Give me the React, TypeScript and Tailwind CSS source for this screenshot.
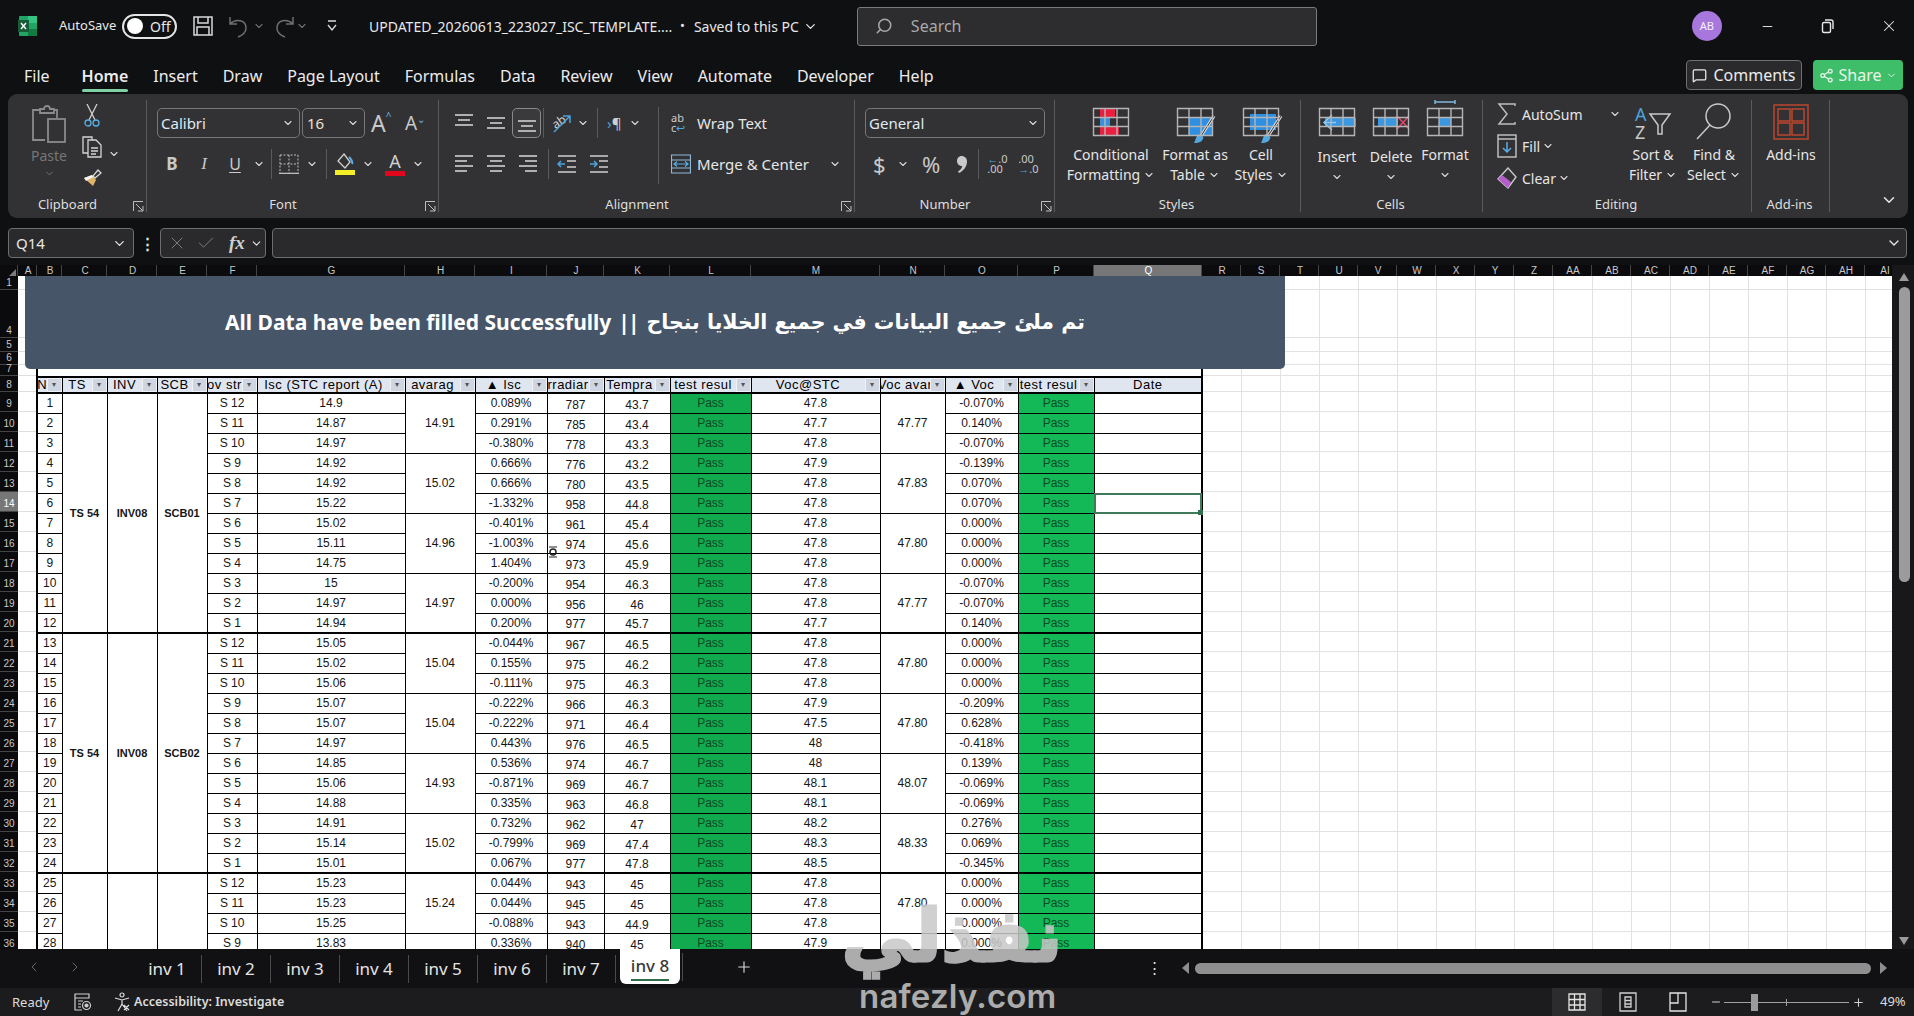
import type { ReactNode } from "react";
import { ChevronDown, Search, X, Minus, ChevronLeft, ChevronRight, Plus, Check, MessageSquare, Share2 } from "lucide-react";

const COLS = ["A","B","C","D","E","F","G","H","I","J","K","L","M","N","O","P","Q","R","S","T","U","V","W","X","Y","Z","AA","AB","AC","AD","AE","AF","AG","AH","AI"];
const COL_W = ["w-[19px]","w-[25px]","w-[45px]","w-[50px]","w-[50px]","w-[50px]","w-[148px]","w-[70px]","w-[72px]","w-[57px]","w-[66px]","w-[81px]","w-[129px]","w-[65px]","w-[73px]","w-[76px]","w-[108px]"];

const ROWS: [string, string, string, string, string, string, string][] = [
  ["S 12","14.9","0.089%","787","43.7","47.8","-0.070%"],
  ["S 11","14.87","0.291%","785","43.4","47.7","0.140%"],
  ["S 10","14.97","-0.380%","778","43.3","47.8","-0.070%"],
  ["S 9","14.92","0.666%","776","43.2","47.9","-0.139%"],
  ["S 8","14.92","0.666%","780","43.5","47.8","0.070%"],
  ["S 7","15.22","-1.332%","958","44.8","47.8","0.070%"],
  ["S 6","15.02","-0.401%","961","45.4","47.8","0.000%"],
  ["S 5","15.11","-1.003%","974","45.6","47.8","0.000%"],
  ["S 4","14.75","1.404%","973","45.9","47.8","0.000%"],
  ["S 3","15","-0.200%","954","46.3","47.8","-0.070%"],
  ["S 2","14.97","0.000%","956","46","47.8","-0.070%"],
  ["S 1","14.94","0.200%","977","45.7","47.7","0.140%"],
  ["S 12","15.05","-0.044%","967","46.5","47.8","0.000%"],
  ["S 11","15.02","0.155%","975","46.2","47.8","0.000%"],
  ["S 10","15.06","-0.111%","975","46.3","47.8","0.000%"],
  ["S 9","15.07","-0.222%","966","46.3","47.9","-0.209%"],
  ["S 8","15.07","-0.222%","971","46.4","47.5","0.628%"],
  ["S 7","14.97","0.443%","976","46.5","48","-0.418%"],
  ["S 6","14.85","0.536%","974","46.7","48","0.139%"],
  ["S 5","15.06","-0.871%","969","46.7","48.1","-0.069%"],
  ["S 4","14.88","0.335%","963","46.8","48.1","-0.069%"],
  ["S 3","14.91","0.732%","962","47","48.2","0.276%"],
  ["S 2","15.14","-0.799%","969","47.4","48.3","0.069%"],
  ["S 1","15.01","0.067%","977","47.8","48.5","-0.345%"],
  ["S 12","15.23","0.044%","943","45","47.8","0.000%"],
  ["S 11","15.23","0.044%","945","45","47.8","0.000%"],
  ["S 10","15.25","-0.088%","943","44.9","47.8","0.000%"],
  ["S 9","13.83","0.336%","940","45","47.9","0.000%"],
];
const AVG_ISC = ["14.91","15.02","14.96","14.97","15.04","15.04","14.93","15.02","15.24",""];
const AVG_VOC = ["47.77","47.83","47.80","47.77","47.80","47.80","48.07","48.33","47.80",""];
const BLOCKS = [["TS 54","INV08","SCB01"],["TS 54","INV08","SCB02"],["","",""]];
// the labels as the narrow columns show them, cut off by the filter buttons
const HEADERS = ["N","TS","INV","SCB","ov str","Isc (STC report (A)","avarag","▲ Isc","rradiar","Tempra","test resul","Voc@STC","Voc avar","▲ Voc","test resul"];
const TABS = ["inv 1","inv 2","inv 3","inv 4","inv 5","inv 6","inv 7"];
const TOP_ROWS = [["1","h-[14px]"],["4","h-[48px]"],["5","h-[14px]"],["6","h-[13px]"],["7","h-[11px]"],["8","h-[16px]"]];

const Chev = ({ className = "" }: { className?: string }) => <ChevronDown size={12} strokeWidth={2.2} className={`text-[#d8d8d8] ${className}`} />;

function Launcher() {
  return (
    <svg width="11" height="11" viewBox="0 0 11 11" fill="none" stroke="#bdbdbd" strokeWidth="1" className="absolute right-[3px] bottom-[6px]">
      <path d="M.5 10V.5H10M3 3l7 7M10 5v5H5" />
    </svg>
  );
}

function Group({ label, w, launcher, children }: { label: string; w: string; launcher?: boolean; children: ReactNode }) {
  return (
    <div className={`relative flex flex-col shrink-0 ${w}`}>
      <div className="flex-1 min-h-0">{children}</div>
      <div className={`h-[26px] flex items-center justify-center text-[13px] text-[#dedede] ${launcher ? "pr-[20px]" : "pr-[3px]"}`}>{label}</div>
      <span className="absolute right-0 top-[6px] bottom-[6px] w-px bg-[#5a5a5c]" />
      {launcher && <Launcher />}
    </div>
  );
}

function AlignIcon({ kind }: { kind: string }) {
  const lines: Record<string, number[][]> = {
    top: [[2,3,20],[5,8,17],[2,13,20]],
    mid: [[2,6,20],[5,11,17],[2,16,20]],
    bot: [[2,9,20],[5,14,17],[2,19,20]],
    left: [[2,3,20],[2,8,14],[2,13,20],[2,18,14]],
    center: [[2,3,20],[5,8,17],[2,13,20],[5,18,17]],
    right: [[2,3,20],[8,8,20],[2,13,20],[8,18,20]],
  };
  return (
    <svg width="22" height="22" viewBox="0 0 22 22" stroke="#cfcfcf" strokeWidth="1.6">
      {lines[kind].map(([a, y, b], i) => <line key={i} x1={a} x2={b} y1={y} y2={y} />)}
    </svg>
  );
}

function IndentIcon({ out }: { out?: boolean }) {
  return (
    <svg width="22" height="22" viewBox="0 0 22 22" fill="none">
      <path d="M2 3h18M2 19h18M11 8h9M11 14h9" stroke="#cfcfcf" strokeWidth="1.6" />
      <path d={out ? "M9 11H2M5 8l-3 3 3 3" : "M2 11h7M6 8l3 3-3 3"} stroke="#4da3dc" strokeWidth="1.5" />
    </svg>
  );
}

function Grid36({ children, top = 0 }: { children?: ReactNode; top?: number }) {
  return (
    <svg width="40" height="41" viewBox="0 0 40 41" fill="none" className="overflow-visible">
      <g transform={`translate(2 ${top})`}>
        {children}
        <path d="M.5 4.5h35v27H.5zM12 4.5v27M24 4.5v27M.5 13.5h35M.5 22.5h35" stroke="#b5b5b5" strokeWidth="1.4" />
      </g>
    </svg>
  );
}

function Brush({ x = 0 }: { x?: number }) {
  return (
    <g transform={`translate(${x} 0)`}>
      <path d="M37 12 24 32" stroke="#d9d9d9" strokeWidth="3.2" />
      <path d="M37 12 24 32" stroke="#333335" strokeWidth="1" />
      <path d="M17 39c3 0 8 0 9.500-5.500L22 30c-3 1-3 6-5 9z" fill="#53a8e2" />
    </g>
  );
}

function BigButton({ icon, lines, w, chevInline = true, tx = "" }: { icon: ReactNode; lines: string[]; w: string; chevInline?: boolean; tx?: string }) {
  return (
    <div className={`flex flex-col items-center shrink-0 ${w}`}>
      <div className="h-[41px] flex justify-center">{icon}</div>
      <div className={`text-[14px] leading-[20px] text-[#e6e6e6] text-center whitespace-nowrap ${tx}`}>
        <div>{lines[0]}</div>
        {lines[1] ? (
          <div className="flex items-center justify-center gap-[3px]">{lines[1]}<Chev /></div>
        ) : chevInline ? (
          <div className="flex justify-center h-[20px] items-center"><Chev /></div>
        ) : null}
      </div>
    </div>
  );
}

function TitleBar() {
  return (
    <div className="h-[52px] flex items-center shrink-0 text-[#e8e8e8]">
      <svg width="20" height="22" viewBox="0 0 20 22" className="ml-[18px] shrink-0">
        <rect x="1" y="1" width="18" height="20" rx="1" fill="#21a366" />
        <rect x="10" y="1" width="9" height="7" fill="#33c481" />
        <rect x="10" y="14" width="9" height="7" fill="#107c41" />
        <rect x="0" y="5" width="11" height="12" fill="#185c37" />
        <path d="M3 8l5 6M8 8l-5 6" stroke="#fff" strokeWidth="1.4" />
      </svg>
      <span className="ml-[21px] text-[13px] w-[58px] whitespace-nowrap">AutoSave</span>
      <div className="ml-[5px] w-[55px] h-[25px] rounded-full border-2 border-[#e4e4e4] flex items-center pl-[3px] shrink-0">
        <span className="w-[16px] h-[16px] rounded-full bg-white" />
        <span className="ml-[7px] text-[14px]">Off</span>
      </div>
      <svg width="22" height="22" viewBox="0 0 22 22" fill="none" stroke="#d9d9d9" strokeWidth="1.5" className="ml-[15px] shrink-0">
        <path d="M2 2h18v18H2zM6 2v6h10V2M5 20v-8h12v8" />
      </svg>
      <svg width="22" height="24" viewBox="0 0 22 24" fill="none" stroke="#6f6f6f" strokeWidth="1.5" className="ml-[14px] shrink-0">
        <path d="M2 3v7h7M2 10c6-6 16-4 16 4 0 4-3 7-8 9" />
      </svg>
      <Chev className="ml-[3px] !text-[#6f6f6f]" />
      <svg width="22" height="24" viewBox="0 0 22 24" fill="none" stroke="#6f6f6f" strokeWidth="1.5" className="ml-[8px] shrink-0">
        <path d="M20 3v7h-7M20 10c-6-6-16-4-16 4 0 4 3 7 8 9" />
      </svg>
      <Chev className="ml-[1px] !text-[#6f6f6f]" />
      <svg width="12" height="14" viewBox="0 0 12 14" fill="none" stroke="#d9d9d9" strokeWidth="1.4" className="ml-[18px] shrink-0">
        <path d="M2 2h8M2 6l4 5 4-5" />
      </svg>
      <span className="ml-[31px] text-[14px] whitespace-nowrap w-[304px]">UPDATED_20260613_223027_ISC_TEMPLATE....</span>
      <span className="ml-[7px] text-[13px]">•</span>
      <span className="ml-[9px] text-[14px] whitespace-nowrap">Saved to this PC</span>
      <ChevronDown size={15} className="ml-[4px] shrink-0" />
      <div className="ml-[39px] w-[460px] h-[39px] rounded-[3px] border border-[#7b7b7b] bg-[#2d2d2f] flex items-center pl-[17px] text-[#a8a8a8] shrink-0">
        <Search size={18} className="-scale-x-100" />
        <span className="ml-[18px] text-[16px]">Search</span>
      </div>
      <div className="ml-[375px] w-[30px] h-[30px] rounded-full bg-[#a877dd] flex items-center justify-center text-[11px] text-white/90 shrink-0">AB</div>
      <Minus size={15} strokeWidth={1.5} className="ml-[38px] shrink-0" />
      <svg width="16" height="16" viewBox="0 0 16 16" fill="none" stroke="#e8e8e8" strokeWidth="1.4" className="ml-[45px] shrink-0">
        <rect x="2.500" y="4.500" width="8" height="10" rx="1.500" />
        <path d="M5 2h6a2 2 0 0 1 2 2v7" />
      </svg>
      <X size={18} strokeWidth={1.4} className="ml-[44px] shrink-0" />
    </div>
  );
}

function TabBar() {
  const items = ["File","Home","Insert","Draw","Page Layout","Formulas","Data","Review","View","Automate","Developer","Help"];
  return (
    <div className="h-[42px] flex items-start shrink-0 pl-[24px] pr-[11px] pt-[8px]">
      <div className="flex gap-[25px] text-[16px] leading-[32px] text-[#ececec]">
        {items.map((t) => (
          <div key={t} className={`relative h-[32px] whitespace-nowrap ${t === "Home" ? "font-semibold ml-[7px]" : ""}`}>
            {t}
            {t === "Home" && <span className="absolute left-0 right-0 top-[29px] h-[3px] bg-[#7fd0a2] rounded-sm" />}
          </div>
        ))}
      </div>
      <div className="ml-auto flex gap-[11px]">
        <div className="w-[116px] h-[30px] rounded-[4px] border border-[#6f6f6f] bg-[#2a2a2c] flex items-center justify-center gap-[6px] text-[16px] text-[#ececec]">
          <MessageSquare size={15} />Comments
        </div>
        <div className="w-[90px] h-[30px] rounded-[4px] bg-[#3fbe69] flex items-center justify-center gap-[5px] text-[16px] text-[#e8f6ea]">
          <Share2 size={15} />Share<ChevronDown size={11} />
        </div>
      </div>
    </div>
  );
}

function ClipboardGroup() {
  return (
    <Group label="Clipboard" w="w-[139px]" launcher>
      <div className="flex pl-[19px] pt-[10px]">
        <div className="w-[44px] flex flex-col items-center">
          <svg width="36" height="40" viewBox="0 0 36 40" fill="none" stroke="#8a8a8a" strokeWidth="1.8">
            <path d="M10 6H2v30h12M24 6h2v8M9 9V5h4c0-4 6-4 6 0h4v4z" />
            <rect x="17" y="15" width="17" height="23" />
          </svg>
          <span className="text-[14px] text-[#767676] mt-[2px] leading-[20px]">Paste</span>
          <ChevronDown size={11} className="text-[#767676] mt-[2px]" />
        </div>
        <div className="ml-[6px] flex flex-col items-center w-[30px]">
          <svg width="16" height="24" viewBox="0 0 16 24" fill="none" strokeWidth="1.3">
            <path d="M3 0l8 16M13 0L5 16" stroke="#cfcfcf" />
            <circle cx="4" cy="19" r="3" stroke="#5aaee6" />
            <circle cx="12" cy="19" r="3" stroke="#5aaee6" />
          </svg>
          <svg width="20" height="22" viewBox="0 0 20 22" fill="none" stroke="#d5d5d5" strokeWidth="1.3" className="mt-[8px]">
            <path d="M6 17H1V1h9v3" />
            <path d="M6 4h8l5 5v12H6zM9 12h7M9 15h7M9 18h5" />
          </svg>
          <svg width="20" height="20" viewBox="0 0 20 20" fill="none" className="mt-[9px]">
            <path d="M11 9l5-6 3 3-6 5z" stroke="#d5d5d5" strokeWidth="1.3" />
            <path d="M2 11l8-3 4 5-3 6z" fill="#e0b469" />
            <path d="M2 11l8-3 1.500 2L4 14z" fill="#f4f4f4" />
          </svg>
        </div>
        <ChevronDown size={12} strokeWidth={2.2} className="text-[#d8d8d8] ml-[1px] mt-[44px]" />
      </div>
    </Group>
  );
}

function FontGroup() {
  return (
    <Group label="Font" w="w-[292px]" launcher>
      <div className="pl-[10px] pt-[14px]">
        <div className="flex items-center h-[30px]">
          <div className="w-[143px] h-[30px] rounded-[5px] border border-[#777] flex items-center justify-between px-[3px] pr-[5px] text-[15px] text-[#dfeaf5]">Calibri<Chev /></div>
          <div className="ml-[2px] w-[63px] h-[30px] rounded-[5px] border border-[#777] flex items-center justify-between pl-[4px] pr-[5px] text-[15px] text-[#f0e0d0]">16<Chev /></div>
          <div className="ml-[6px] w-[26px] flex text-[23px] text-[#c9c9c9]">A<span className="text-[10px] text-[#6fb5e5] mt-[3px]">^</span></div>
          <div className="ml-[8px] w-[26px] flex text-[19px] text-[#c9c9c9]">A<span className="text-[10px] text-[#6fb5e5] mt-[3px]">⌄</span></div>
        </div>
        <div className="flex items-center h-[30px] mt-[11px] text-[#c9c9c9]">
          <span className="w-[30px] text-center text-[17px] font-bold">B</span>
          <span className="ml-[2px] w-[30px] text-center text-[17px] italic" style={{ fontFamily: "'Liberation Serif', serif" }}>I</span>
          <span className="ml-[2px] w-[28px] text-center text-[16px] underline underline-offset-2">U</span>
          <Chev className="ml-[4px]" />
          <span className="ml-[6px] w-px h-[30px] bg-[#5a5a5c]" />
          <svg width="20" height="20" viewBox="0 0 20 20" fill="none" stroke="#bdbdbd" className="ml-[7px]">
            <path d="M1 1h18M1 10h18M10 1v18M1 1v18M19 1v18" strokeDasharray="2 1.500" />
            <path d="M0 19.500h20" strokeWidth="1.600" />
          </svg>
          <Chev className="ml-[7px]" />
          <span className="ml-[8px] w-px h-[30px] bg-[#5a5a5c]" />
          <div className="ml-[8px] w-[20px] flex flex-col items-center">
            <svg width="18" height="17" viewBox="0 0 18 17" fill="none" stroke="#cfcfcf" strokeWidth="1.300">
              <path d="M8 1l6 8-5 6-7-7z" />
              <path d="M13 4c2 2 4 5 3 7" stroke="#5aaee6" strokeWidth="2" />
            </svg>
            <span className="w-[20px] h-[5px] bg-[#f3ef26]" />
          </div>
          <Chev className="ml-[7px]" />
          <div className="ml-[11px] w-[20px] flex flex-col items-center text-[18px] leading-[18px] text-[#cfcfcf]">
            A<span className="w-[20px] h-[5px] bg-[#e0071b] mt-[1px]" />
          </div>
          <Chev className="ml-[7px]" />
        </div>
      </div>
    </Group>
  );
}

function AlignmentGroup() {
  return (
    <Group label="Alignment" w="w-[416px]" launcher>
      <div className="pl-[14px] pt-[14px] flex">
        <div className="w-[205px]">
          <div className="flex items-center h-[30px]">
            <span className="w-[32px] flex"><AlignIcon kind="top" /></span>
            <span className="w-[27px] flex"><AlignIcon kind="mid" /></span>
            <span className="w-[29px] h-[30px] rounded-[5px] border border-[#8a8a8a] bg-[#3a3a3c] flex items-center justify-center"><AlignIcon kind="bot" /></span>
            <span className="ml-[2px] w-px h-[30px] bg-[#5a5a5c]" />
            <svg width="22" height="22" viewBox="0 0 22 22" fill="none" className="ml-[7px]">
              <text x="1" y="14" fontSize="12" fill="#cfcfcf" transform="rotate(-35 8 10)" style={{ fontFamily: "'Noto Sans', sans-serif" }}>ab</text>
              <path d="M3 20L19 4M12 4h7v7" stroke="#4da3dc" strokeWidth="1.500" />
            </svg>
            <Chev className="ml-[4px]" />
            <span className="ml-[8px] w-px h-[30px] bg-[#5a5a5c]" />
            <span className="ml-[9px] text-[15px] text-[#cfcfcf]"><span className="text-[#4da3dc]">›</span>¶</span>
            <Chev className="ml-[8px]" />
          </div>
          <div className="flex items-center h-[30px] mt-[11px]">
            <span className="w-[32px] flex"><AlignIcon kind="left" /></span>
            <span className="w-[32px] flex"><AlignIcon kind="center" /></span>
            <span className="w-[24px] flex"><AlignIcon kind="right" /></span>
            <span className="ml-[7px] w-px h-[30px] bg-[#5a5a5c]" />
            <span className="ml-[7px] w-[32px] flex"><IndentIcon out /></span>
            <span className="w-[24px] flex"><IndentIcon /></span>
          </div>
        </div>
        <span className="w-px h-[77px] bg-[#5a5a5c] -mt-[1px]" />
        <div className="pl-[12px] text-[15px] text-[#e6e6e6]">
          <div className="flex items-center h-[30px]">
            <span className="w-[26px] text-[11px] leading-[10px] text-[#cfcfcf]">ab<br />c<span className="text-[#4da3dc]">↩</span></span>
            Wrap Text
          </div>
          <div className="flex items-center h-[30px] mt-[11px] whitespace-nowrap">
            <svg width="20" height="24" viewBox="0 0 20 24" fill="none" stroke="#8fb8d8" strokeWidth="1.200" className="mr-[6px]">
              <path d="M.5 3h19v18H.5zM.5 8h19M.5 16h19" />
              <path d="M3 12h14M6 9.500 3 12l3 2.500M14 9.500l3 2.500-3 2.500" stroke="#5aaee6" />
            </svg>
            Merge &amp; Center
            <Chev className="ml-[20px]" />
          </div>
        </div>
      </div>
    </Group>
  );
}

function NumberGroup() {
  return (
    <Group label="Number" w="w-[200px]" launcher>
      <div className="pl-[10px] pt-[14px]">
        <div className="w-[180px] h-[30px] rounded-[5px] border border-[#777] flex items-center justify-between pl-[3px] pr-[5px] text-[15px] text-[#dfeaf5]">General<Chev /></div>
        <div className="flex items-center h-[30px] mt-[11px] text-[#c9c9c9]">
          <span className="ml-[8px] text-[22px] w-[14px]">$</span>
          <Chev className="ml-[10px]" />
          <span className="ml-[13px] text-[22px]">%</span>
          <svg width="10" height="17" viewBox="0 0 10 17" fill="#c9c9c9" className="ml-[17px]">
            <path d="M4.500 0C7.800 0 10 2.300 10 5.500 10 10.500 6.500 15 2 17l-1-1.500C3.500 14 5 12 5.200 10 2.300 10 0 8 0 5 0 2.200 2 0 4.500 0z" />
          </svg>
          <span className="ml-[11px] w-px h-[30px] bg-[#5a5a5c]" />
          <span className="ml-[8px] text-[11px] leading-[10px] w-[24px]"><span className="text-[#4da3dc]">←</span>.0<br />.00</span>
          <span className="ml-[7px] text-[11px] leading-[10px] w-[24px]">.00<br /><span className="text-[#4da3dc]">→</span>.0</span>
        </div>
      </div>
    </Group>
  );
}

function StylesGroup() {
  return (
    <Group label="Styles" w="w-[246px]">
      <div className="flex pl-[6px] pt-[10px]">
        <BigButton w="w-[100px]" lines={["Conditional", "Formatting"]} icon={
          <Grid36>
            <rect x="7" y="4" width="15" height="10" fill="#e81f3e" />
            <rect x="7" y="14" width="10" height="8" fill="#3a8fdc" />
            <rect x="7" y="22" width="19" height="10" fill="#e81f3e" />
          </Grid36>
        } />
        <BigButton w="w-[68px]" lines={["Format as", "Table"]} icon={
          <Grid36>
            <rect x="12" y="13" width="24" height="19" fill="#2f8fe0" />
            <Brush />
          </Grid36>
        } />
        <BigButton w="w-[64px]" lines={["Cell", "Styles"]} icon={
          <Grid36>
            <rect x="7" y="10" width="26" height="16" fill="#2f8fe0" />
            <Brush x={1} />
          </Grid36>
        } />
      </div>
    </Group>
  );
}

function CellsGroup() {
  return (
    <Group label="Cells" w="w-[182px]">
      <div className="flex pl-[9px] pt-[10px]">
        <BigButton w="w-[54px]" tx="mt-[2px]" lines={["Insert"]} icon={
          <Grid36>
            <rect x="6" y="14" width="31" height="9" fill="#3a97e0" />
            <path d="M13 11l-8 7.500 8 7.500M5 18.500h12" stroke="#8cc8f0" strokeWidth="1.500" fill="none" />
          </Grid36>
        } />
        <BigButton w="w-[54px]" tx="mt-[2px]" lines={["Delete"]} icon={
          <Grid36>
            <rect x="5" y="14" width="20" height="9" fill="#3a97e0" />
            <path d="M24 12l12 13M36 12L24 25" stroke="#e0456a" strokeWidth="1.700" fill="none" />
          </Grid36>
        } />
        <BigButton w="w-[54px]" lines={["Format"]} icon={
          <Grid36>
            <path d="M8 -2h20M8 -4v4M28 -4v4" stroke="#7fb6dc" strokeWidth="1.500" />
            <rect x="12" y="14" width="12" height="9" fill="#3a97e0" />
          </Grid36>
        } />
      </div>
    </Group>
  );
}

function EditingGroup() {
  return (
    <Group label="Editing" w="w-[269px]">
      <div className="flex pl-[14px] pt-[7px]">
        <div className="w-[129px] text-[14px] text-[#e6e6e6]">
          <div className="flex items-center h-[26px]">
            <svg width="20" height="22" viewBox="0 0 20 22" fill="none" stroke="#bdbdbd" strokeWidth="1.500"><path d="M18 3V1H2l8 10-8 10h16v-2" /></svg>
            <span className="ml-[5px] w-[87px]">AutoSum</span>
            <Chev />
          </div>
          <div className="flex items-center h-[26px] mt-[6px]">
            <svg width="20" height="24" viewBox="0 0 20 24" fill="none" className="shrink-0">
              <path d="M1 1h18v22H1zM1 5h18" stroke="#bdbdbd" strokeWidth="1.500" />
              <path d="M10 8v10M6 14l4 4 4-4" stroke="#5aaee6" strokeWidth="1.500" />
            </svg>
            <span className="ml-[5px]">Fill</span>
            <Chev className="ml-[2px]" />
          </div>
          <div className="flex items-center h-[26px] mt-[6px]">
            <svg width="20" height="22" viewBox="0 0 20 22" fill="none" className="shrink-0">
              <path d="M11 1l8 9-8 11-10-9z" stroke="#c9c9c9" strokeWidth="1.400" />
              <path d="M5 8l9 7-3 6-10-9z" fill="#b45ecb" />
            </svg>
            <span className="ml-[5px]">Clear</span>
            <Chev className="ml-[2px]" />
          </div>
        </div>
        <BigButton w="w-[54px]" tx="mt-[3px]" lines={["Sort &", "Filter"]} icon={
          <svg width="40" height="38" viewBox="0 0 40 38" fill="none" className="mt-[3px]" style={{ fontFamily: "'Noto Sans', sans-serif" }}>
            <text x="2" y="17" fontSize="18" fill="#4da3dc">A</text>
            <text x="2" y="35" fontSize="18" fill="#c9c9c9">Z</text>
            <path d="M17 10h20l-8 11v9h-4v-9z" stroke="#c9c9c9" strokeWidth="1.500" />
          </svg>
        } />
        <div className="w-[5px]" />
        <BigButton w="w-[58px]" tx="mt-[3px]" lines={["Find &", "Select"]} icon={
          <svg width="38" height="38" viewBox="0 0 38 38" fill="none" stroke="#c9c9c9" strokeWidth="1.500" className="mt-[1px]">
            <circle cx="23" cy="14" r="12" />
            <path d="M15 23 2 37" />
          </svg>
        } />
      </div>
    </Group>
  );
}

function Ribbon() {
  return (
    <div className="mx-[8px] w-[1900px] h-[124px] rounded-[9px] bg-[#323234] flex shrink-0">
      <ClipboardGroup />
      <FontGroup />
      <AlignmentGroup />
      <NumberGroup />
      <StylesGroup />
      <CellsGroup />
      <EditingGroup />
      <Group label="Add-ins" w="w-[78px]">
        <div className="flex pt-[10px] justify-center">
          <BigButton w="w-[76px]" chevInline={false} lines={["Add-ins"]} icon={
            <svg width="36" height="36" viewBox="0 0 36 36" fill="none" stroke="#b9472c" strokeWidth="1.500">
              <rect x="1" y="1" width="34" height="34" />
              <rect x="5" y="5" width="12" height="12" /><rect x="19" y="5" width="12" height="12" />
              <rect x="5" y="19" width="12" height="12" /><rect x="19" y="19" width="12" height="12" />
            </svg>
          } />
        </div>
      </Group>
      <div className="flex-1 flex justify-end items-end pr-[10px] pb-[9px]"><ChevronDown size={18} className="text-[#e8e8e8]" /></div>
    </div>
  );
}

function FormulaBar() {
  return (
    <div className="mt-[10px] mb-[7px] h-[30px] flex items-center pl-[8px] pr-[7px] shrink-0 text-[#e6e6e6]">
      <div className="w-[126px] h-[30px] rounded-[4px] border border-[#6e6e6e] bg-[#2a2a2c] flex items-center justify-between pl-[7px] pr-[6px] text-[15px]">Q14<ChevronDown size={15} /></div>
      <span className="w-[26px] text-center font-bold text-[15px] leading-[6px]">⋮</span>
      <div className="w-[106px] h-[30px] rounded-[4px] border border-[#6e6e6e] bg-[#2a2a2c] flex items-center pl-[6px] shrink-0">
        <X size={20} strokeWidth={1.2} className="text-[#7c7c7c]" />
        <Check size={20} strokeWidth={1.2} className="ml-[9px] text-[#7c7c7c]" />
        <span className="ml-[13px] text-[19px] italic font-bold text-[#cfcfcf]" style={{ fontFamily: "'Liberation Serif', serif" }}>fx</span>
        <ChevronDown size={13} className="ml-[5px]" />
      </div>
      <div className="ml-[6px] flex-1 h-[30px] rounded-[4px] border border-[#6e6e6e] bg-[#2a2a2c] flex items-center justify-end pr-[4px]"><ChevronDown size={16} /></div>
    </div>
  );
}

function ColumnHeaders() {
  return (
    <div className="h-[11px] flex bg-[#0b0b0d] text-[10px] leading-[11px] text-[#c8c8c8] overflow-hidden shrink-0">
      <div className="w-[18px] shrink-0 flex justify-end items-end pr-[1px] border-r border-[#444]">
        <span className="w-0 h-0 border-l-[7px] border-l-transparent border-b-[7px] border-b-[#7a7a7a]" />
      </div>
      {COLS.map((c, i) => (
        <div key={c} className={`shrink-0 text-center pl-[2px] border-r border-[#444] ${i < 17 ? COL_W[i] : "w-[39px]"} ${c === "Q" ? "bg-[#777] text-white" : ""}`}>{c}</div>
      ))}
    </div>
  );
}

function RowHeaders() {
  const nums = Array.from({ length: 28 }, (_, i) => i + 9);
  return (
    <div className="w-[18px] shrink-0 bg-[#0b0b0d] text-[10px] text-[#c8c8c8] text-center">
      {TOP_ROWS.map(([n, h]) => (
        <div key={n} className={`flex items-end justify-center border-b border-[#444] leading-[11px] pb-[1px] ${h}`}>{n}</div>
      ))}
      {nums.map((n) => (
        <div key={n} className={`h-[20px] flex items-end justify-center border-b border-[#444] pb-[2px] leading-[11px] ${n === 14 ? "bg-[#777] text-white" : ""}`}>{n}</div>
      ))}
    </div>
  );
}

function HeaderCell({ label, filter = true, i }: { label: string; filter?: boolean; i: number }) {
  return (
    <th className={`p-0 h-[16px] border-y-2 border-black font-normal bg-[#e0e6ef] ${i === 0 ? "border-l-2" : "border-l"} ${filter ? "" : "border-r-2"}`}>
      <div className="flex h-[14px] text-[13px] leading-[14px] tracking-[0.5px] text-black">
        <div className="flex-1 min-w-0 overflow-hidden whitespace-nowrap flex justify-center">{label}</div>
        {filter && <div className="w-[15px] shrink-0 bg-[#cfd6e2] border border-[#eef1f6] flex items-center justify-center text-[8px] text-[#555]">▾</div>}
      </div>
    </th>
  );
}

function DataTable() {
  const base = "border border-black p-0 text-center align-middle";
  return (
    <table className="table-fixed border-collapse w-[1165px] shrink-0 bg-white text-[12px] leading-[14px] text-[#161616]">
      <colgroup>
        {COL_W.slice(1).map((w, i) => <col key={i} className={w} />)}
      </colgroup>
      <thead>
        <tr>
          {HEADERS.map((h, i) => <HeaderCell key={i} label={h} i={i} />)}
          <HeaderCell label="Date" filter={false} i={15} />
        </tr>
      </thead>
      <tbody>
        {ROWS.map((r, i) => {
          const top = i > 0 && i % 12 === 0 ? "border-t-2" : "";
          const g = Math.floor(i / 12);
          const a = Math.floor(i / 3);
          return (
            <tr key={i} className="h-[20px]">
              <td className={`${base} ${top} border-l-2`}>{i + 1}</td>
              {i % 12 === 0 && BLOCKS[g].map((t, k) => (
                <td key={k} rowSpan={12} className={`${base} ${top} font-bold text-[11px]`}>{t}</td>
              ))}
              <td className={`${base} ${top}`}>{r[0]}</td>
              <td className={`${base} ${top}`}>{r[1]}</td>
              {i % 3 === 0 && <td rowSpan={3} className={`${base} ${top}`}>{AVG_ISC[a]}</td>}
              <td className={`${base} ${top}`}>{r[2]}</td>
              <td className={`${base} ${top} pt-[3px]`}>{r[3]}</td>
              <td className={`${base} ${top} pt-[3px]`}>{r[4]}</td>
              <td className={`${base} ${top} bg-[#12aa4e] text-[#0a4a24]`}>Pass</td>
              <td className={`${base} ${top}`}>{r[5]}</td>
              {i % 3 === 0 && <td rowSpan={3} className={`${base} ${top}`}>{AVG_VOC[a]}</td>}
              <td className={`${base} ${top}`}>{r[6]}</td>
              <td className={`${base} ${top} bg-[#13b956] text-[#0a4a24]`}>Pass</td>
              <td className={`${base} ${top} border-r-2 relative`}>
                {i === 5 && (
                  <div className="absolute -inset-[1px] border-2 border-[#3f7a5a]">
                    <span className="absolute -right-[3px] -bottom-[3px] w-[5px] h-[5px] bg-[#2f6f4c]" />
                  </div>
                )}
              </td>
            </tr>
          );
        })}
      </tbody>
    </table>
  );
}

function Sheet() {
  const hLines = Array.from({ length: 28 }, (_, i) => i);
  return (
    <div className="relative flex-1 min-w-0 bg-white overflow-hidden flex">
      <div className="w-[18px] shrink-0">
        {TOP_ROWS.map(([n, h]) => <div key={n} className={`border-b border-[#dedede] ${h}`} />)}
        {hLines.map((n) => <div key={n} className="h-[20px] border-b border-[#dedede]" />)}
      </div>
      <div className="shrink-0 flex flex-col w-[1167px]">
        <div className="h-[100px] shrink-0 border-x-2 border-black" />
        <DataTable />
      </div>
      <div className="flex-1 bg-[linear-gradient(90deg,#e2e2e2_1px,transparent_1px)] bg-[size:39px_100%] bg-[position:38px_0]">
        {TOP_ROWS.map(([n, h]) => <div key={n} className={`border-b border-[#e2e2e2] ${h}`} />)}
        {hLines.map((n) => <div key={n} className="h-[20px] border-b border-[#e2e2e2]" />)}
      </div>
      {/* banner lies over the first rows */}
      <div className="absolute left-[7px] top-0 w-[1260px] h-[93px] rounded-b-[5px] bg-[#475569] flex items-center justify-center gap-[7px] text-white font-bold text-[21px] whitespace-nowrap" style={{ fontFamily: "'Noto Sans', 'DejaVu Sans', sans-serif" }}>
        <span>All Data have been filled Successfully</span>
        <span className="tracking-[-2px] pr-[2px]">||</span>
        <span dir="rtl" className="text-[20.5px]" style={{ fontFamily: "'DejaVu Sans', sans-serif" }}>تم ملئ جميع البيانات في جميع الخلايا بنجاح</span>
      </div>
      <svg width="10" height="12" viewBox="0 0 10 12" fill="none" stroke="#222" className="absolute left-[530px] top-[270px]">
        <circle cx="5" cy="6" r="3" strokeWidth="1.500" />
        <path d="M1 1h8M1 11h8" />
      </svg>
    </div>
  );
}

function VScroll() {
  return (
    <div className="w-[22px] shrink-0 bg-[#18181a] flex flex-col items-center pl-[2px] pt-[8px] pb-[4px]">
      <span className="w-0 h-0 border-x-[5px] border-x-transparent border-b-[8px] border-b-[#9a9a9a]" />
      <div className="mt-[6px] w-[11px] h-[295px] rounded-full bg-[#9b9b9d]" />
      <span className="mt-auto w-0 h-0 border-x-[5px] border-x-transparent border-t-[8px] border-t-[#9a9a9a]" />
    </div>
  );
}

function SheetTabs() {
  return (
    <div className="h-[39px] flex items-start bg-[#111113] shrink-0">
      <div className="w-[133px] flex items-center pl-[26px] gap-[25px] h-[36px] text-[#6f6f6f] shrink-0">
        <ChevronLeft size={16} strokeWidth={1.4} />
        <ChevronRight size={16} strokeWidth={1.4} />
      </div>
      <div className="flex text-[17px] text-[#e4e4e4] h-[35px]">
        {TABS.map((t) => (
          <div key={t} className="w-[69px] h-[28px] mt-[6px] flex items-center justify-center border-r border-[#4a4a4c]">{t}</div>
        ))}
        <div className="ml-[4px] w-[60px] h-[35px] bg-white rounded-b-[6px] flex flex-col items-center text-[#3a3a3a] font-medium">
          <span className="mt-[5px] leading-[24px]">inv 8</span>
          <span className="mt-[1px] w-[38px] h-[2px] bg-[#2f6f4c]" />
        </div>
        <span className="ml-[2px] mt-[4px] w-px h-[28px] bg-[#4a4a4c]" />
      </div>
      <Plus size={18} strokeWidth={1.5} className="ml-[52px] mt-[9px] text-[#dcdcdc] shrink-0" />
      <span className="ml-[394px] mt-[8px] text-[15px] leading-[20px] text-[#e4e4e4] w-[10px] text-center shrink-0">⋮</span>
      <div className="ml-[25px] mt-[13px] flex items-center shrink-0">
        <span className="w-0 h-0 border-y-[6px] border-y-transparent border-r-[7px] border-r-[#8d8d8d]" />
        <div className="ml-[6px] w-[676px] h-[11px] rounded-full bg-[#8f8f8f]" />
        <span className="ml-[9px] w-0 h-0 border-y-[6px] border-y-transparent border-l-[7px] border-l-[#8d8d8d]" />
      </div>
    </div>
  );
}

function StatusBar() {
  return (
    <div className="h-[28px] flex items-center bg-[#1c1c1e] shrink-0 text-[13px] text-[#dcdcdc]">
      <span className="ml-[12px] w-[36px] mt-[1px]">Ready</span>
      <svg width="18" height="18" viewBox="0 0 18 18" fill="none" stroke="#cfcfcf" strokeWidth="1.200" className="ml-[26px]">
        <path d="M1 1h14v4H1zM1 5v12h7M4 8h5M4 11h3M4 14h3" />
        <circle cx="12.500" cy="12.500" r="4" /><circle cx="12.500" cy="12.500" r="1.500" fill="#cfcfcf" />
      </svg>
      <svg width="18" height="20" viewBox="0 0 18 20" fill="none" stroke="#dcdcdc" strokeWidth="1.200" className="ml-[21px]">
        <circle cx="9" cy="3" r="2" /><path d="M2 6l7 2 7-2M9 8v4l-4 7M9 12l5 7M11 13l5 5M16 13l-5 5" />
      </svg>
      <span className="ml-[3px] mt-[1px] text-[12.5px] font-semibold whitespace-nowrap">Accessibility: Investigate</span>
      <div className="ml-auto flex items-center h-[28px]">
        <div className="w-[50px] h-[28px] bg-[#2c2c2e] flex items-center justify-center">
          <svg width="18" height="18" viewBox="0 0 18 18" fill="none" stroke="#e4e4e4" strokeWidth="1.300"><path d="M1 1h16v16H1zM1 6.500h16M1 12h16M6.500 1v16M12 1v16" /></svg>
        </div>
        <svg width="18" height="20" viewBox="0 0 18 20" fill="none" stroke="#d0d0d0" strokeWidth="1.300" className="ml-[17px]"><path d="M1 1h16v18H1zM6 5h6v10H6zM6 8.500h6M6 12h6" /></svg>
        <svg width="18" height="20" viewBox="0 0 18 20" fill="none" stroke="#e4e4e4" strokeWidth="1.300" className="ml-[32px]"><path d="M1 1h16v18H1zM1 11h8V1" /></svg>
        <Minus size={12} className="ml-[23px] text-[#d0d0d0]" />
        <div className="ml-[2px] relative w-[125px] h-px bg-[#a0a0a0]">
          <span className="absolute left-[27px] -top-[8px] w-[7px] h-[17px] bg-[#9b9b9b]" />
          <span className="absolute left-[62px] -top-[3px] w-px h-[7px] bg-[#a0a0a0]" />
        </div>
        <Plus size={13} className="ml-[3px] text-[#d0d0d0]" />
        <span className="ml-[15px] mr-[8px] text-[13px] w-[26px]">49%</span>
      </div>
    </div>
  );
}

export default function App() {
  return (
    <div className="relative w-[1914px] h-[1016px] flex flex-col overflow-hidden bg-[#0f1012]" style={{ fontFamily: "'Noto Sans', sans-serif" }}>
      <TitleBar />
      <TabBar />
      <Ribbon />
      <FormulaBar />
      <div className="flex-1 min-h-0 flex">
        <div className="flex-1 min-w-0 flex flex-col" style={{ fontFamily: "'Liberation Sans', sans-serif" }}>
          <ColumnHeaders />
          <div className="flex-1 min-h-0 flex overflow-hidden">
            <RowHeaders />
            <Sheet />
          </div>
        </div>
        <VScroll />
      </div>
      <SheetTabs />
      <StatusBar />
      {/* watermark */}
      <div dir="rtl" className="absolute left-[850px] top-[896px] w-[212px] text-center text-[72px] leading-[80px] font-bold text-[#c8c8c8] opacity-85 [-webkit-text-stroke:3px_#c8c8c8] pointer-events-none" style={{ fontFamily: "'DejaVu Sans', sans-serif" }}>نفذلي</div>
      <div className="absolute left-[859px] top-[976px] text-[33px] leading-[40px] font-semibold tracking-[0.2px] text-[#bcbcbc] opacity-90 pointer-events-none" style={{ fontFamily: "Inter, sans-serif" }}>nafezly.com</div>
    </div>
  );
}
